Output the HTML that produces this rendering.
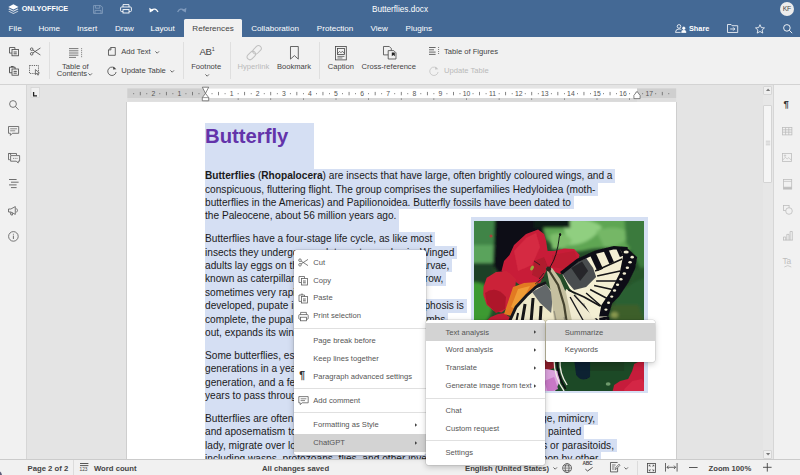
<!DOCTYPE html>
<html lang="en">
<head>
<meta charset="utf-8">
<title>Butterflies.docx</title>
<style>
*{box-sizing:border-box;margin:0;padding:0}
html,body{width:800px;height:475px;overflow:hidden;background:#e4e4e4;font-family:"Liberation Sans",sans-serif;color:#444}
.abs{position:absolute}
#app{position:relative;width:800px;height:475px;overflow:hidden}
svg{position:absolute;overflow:visible}
/* header */
#hdr{left:0;top:0;width:800px;height:37.2px;background:#446995}
#hdr .t{position:absolute;color:#fff;font-size:8.1px;line-height:10px;white-space:nowrap}
#brand{left:21.7px;top:4px;font-weight:bold;font-size:7.3px !important;letter-spacing:0}
.tab{top:23.6px}
#reftab{left:184px;top:19px;width:58px;height:19px;background:#f1f1f1;border-radius:1.5px 1.5px 0 0}
#reftab span{position:absolute;left:0;width:58px;text-align:center;top:4.6px;font-size:8.1px;line-height:10px;color:#444}
/* toolbar */
#tb{left:0;top:37.2px;width:800px;height:47.5px;background:#f1f1f1;border-bottom:1px solid #d3d3d3}
#tb .l{position:absolute;font-size:7.6px;line-height:7.6px;color:#444;white-space:nowrap}
#tb .l.c{text-align:center}
#tb .dis{color:#b9b9b9}
.sep{position:absolute;top:5px;width:1px;height:37px;background:#dfdfdf}
/* sidebars */
#ls{left:0;top:84.7px;width:27.4px;height:375px;background:#f1f1f1;border-right:1px solid #d6d6d6}
#rs{left:773.4px;top:84.7px;width:26.6px;height:375px;background:#f1f1f1;border-left:1px solid #d6d6d6}
/* status */
#sb{left:0;top:458.8px;width:800px;height:16.2px;background:#f1f1f1;border-top:1px solid #cbcbcb}
#sb .t{position:absolute;top:3.8px;font-size:7.7px;line-height:10px;font-weight:bold;color:#444;white-space:nowrap}
/* doc */
#page{left:126.2px;top:101.7px;width:550.5px;height:360px;background:#fff;border-left:1px solid #cecece;border-right:1px solid #cecece}
.ln{position:absolute;left:205px;font-size:10.15px;line-height:13.43px;color:#1a1a1a;white-space:pre;background:#d5dff3}
.ln .tx{position:relative;top:0px}
#ttl{position:absolute;left:205px;top:122.6px;width:108.8px;height:46.5px;background:#d5dff3}
#ttl span{position:absolute;left:0;top:1.9px;font-size:20.3px;line-height:24px;font-weight:bold;color:#6333aa;white-space:nowrap}
#imgsel{position:absolute;left:470.5px;top:217px;width:177px;height:176px;background:#d5dff3}
#img{position:absolute;left:474.3px;top:220.5px;width:170.2px;height:170px;overflow:hidden;background:#1f3a1e}
/* scrollbar */
.sbtn{position:absolute;left:763.3px;width:9.2px;height:9px;background:#efefef;border:1px solid #d6d6d6;border-radius:1px}
#thumb{position:absolute;left:763.3px;top:105.3px;width:9.2px;height:78px;background:#f5f5f5;border:1px solid #d4d4d4;border-radius:1px}
/* menus */
.menu{position:absolute;background:#fff;border-radius:2.5px;box-shadow:0 2px 6px rgba(0,0,0,.22),0 0 0 .6px rgba(0,0,0,.12)}
.mi{position:absolute;left:0;right:0;height:17.9px;font-size:7.6px;line-height:17.9px;color:#555;white-space:nowrap}
.mi.hl{background:#d3d3d3}
.mi .ar{position:absolute;top:0;font-size:5px;color:#444}
.ms{position:absolute;left:0;right:0;height:1px;background:#e0e0e0}
</style>
</head>
<body>
<div id="app">

<!-- document area -->
<div id="page" class="abs"></div>
<div id="ttl"><span>Butterfly</span></div>
<div class="ln" style="top:169.10px;height:13.53px"><span class="tx"><b>Butterflies</b> (<b>Rhopalocera</b>) are insects that have large, often brightly coloured wings, and a </span></div>
<div class="ln" style="top:182.53px;height:13.53px"><span class="tx">conspicuous, fluttering flight. The group comprises the superfamilies Hedyloidea (moth- </span></div>
<div class="ln" style="top:195.96px;height:13.53px"><span class="tx">butterflies in the Americas) and Papilionoidea. Butterfly fossils have been dated to </span></div>
<div class="ln" style="top:209.39px;height:22.75px"><span class="tx">the Paleocene, about 56 million years ago. </span></div>
<div class="ln" style="top:232.10px;height:13.53px"><span class="tx">Butterflies have a four-stage life cycle, as like most </span></div>
<div class="ln" style="top:245.53px;height:13.53px"><span class="tx">insects they undergo complete metamorphosis. Winged </span></div>
<div class="ln" style="top:258.96px;height:13.53px"><span class="tx">adults lay eggs on the food plant on which their larvae, </span></div>
<div class="ln" style="top:272.39px;height:13.53px"><span class="tx">known as caterpillars, will feed. The caterpillars grow, </span></div>
<div class="ln" style="top:285.82px;height:13.53px"><span class="tx">sometimes very rapidly, and when fully </span></div>
<div class="ln" style="top:299.25px;height:13.53px"><span class="tx">developed, pupate in a chrysalis. When metamorphosis is </span></div>
<div class="ln" style="top:312.68px;height:13.53px"><span class="tx">complete, the pupal skin splits, the adult insect climbs </span></div>
<div class="ln" style="top:326.11px;height:22.75px"><span class="tx">out, expands its wings to dry, and flies off. </span></div>
<div class="ln" style="top:348.80px;height:13.53px"><span class="tx">Some butterflies, especially in the tropics, have several </span></div>
<div class="ln" style="top:362.23px;height:13.53px"><span class="tx">generations in a year, while others have a single </span></div>
<div class="ln" style="top:375.66px;height:13.53px"><span class="tx">generation, and a few in cold locations may take several </span></div>
<div class="ln" style="top:389.09px;height:22.75px"><span class="tx">years to pass through their entire life cycle. </span></div>
<div class="ln" style="top:411.80px;height:13.53px;letter-spacing:0.025px"><span class="tx">Butterflies are often polymorphic, and many species make use of camouflage, mimicry, </span></div>
<div class="ln" style="top:425.23px;height:13.53px;letter-spacing:0.025px"><span class="tx">and aposematism to evade their predators. Some, like the monarch and the painted </span></div>
<div class="ln" style="top:438.66px;height:13.53px;letter-spacing:0.025px"><span class="tx">lady, migrate over long distances. Many butterflies are attacked by parasites or parasitoids, </span></div>
<div class="ln" style="top:452.09px;height:13.53px;letter-spacing:0.025px"><span class="tx">including wasps, protozoans, flies, and other invertebrates, or are preyed upon by other </span></div>
<div id="imgsel"></div>
<div id="img">
<svg style="left:0;top:0" width="170.2" height="170" viewBox="0 0 170 170" preserveAspectRatio="none">
<defs>
<filter id="b1" x="-10%" y="-10%" width="120%" height="120%"><feGaussianBlur stdDeviation="1.8"/></filter>
<filter id="b2" x="-10%" y="-10%" width="120%" height="120%"><feGaussianBlur stdDeviation="0.55"/></filter>
<filter id="b3" x="-10%" y="-10%" width="120%" height="120%"><feGaussianBlur stdDeviation="0.5"/></filter>
</defs>
<rect width="170" height="170" fill="#244c28"/>
<!-- background foliage -->
<g filter="url(#b1)">
<path d="M-5 -5H24V28H-5Z" fill="#3f8446"/>
<path d="M-5 24H22V42H-5Z" fill="#5aa35c"/>
<path d="M-5 42H20V62H-5Z" fill="#1e4126"/>
<path d="M-5 62Q12 58 18 76Q20 96 8 104L-5 106Z" fill="#3e9a32"/>
<path d="M21 -8H68L72 16L60 28L38 40L26 54L19 44Z" fill="#0b1116"/>
<path d="M24 -8H64V22H24Z" fill="#090e13"/><path d="M26 0H56V34H26Z" fill="#0b1015"/>
<path d="M66 -6H160V30Q130 24 108 30Q86 34 72 18Z" fill="#5fa653"/>
<path d="M88 0Q112 -6 128 6Q116 24 94 24Z" fill="#90cf80"/>
<path d="M76 14Q90 8 98 20Q90 30 78 28Z" fill="#7dbd6a"/>
<path d="M122 10Q142 2 156 12Q150 26 130 26Z" fill="#74b766"/>
<path d="M150 -6H176V70Q164 40 152 22Z" fill="#3a7a3c"/>
<path d="M60 -6H96V7H60Z" fill="#101a16"/><path d="M158 50L176 44V100L150 84Z" fill="#27562c"/>
<path d="M142 72Q160 60 176 56V120Q150 112 138 94Z" fill="#2c6030"/>
<path d="M128 94Q150 100 176 118V176H60V140Q96 122 128 94Z" fill="#264f2a"/>
<path d="M136 84L164 84L170 100L140 100Z" fill="#3d5e2c"/>
<ellipse cx="140" cy="94" rx="4" ry="3" fill="#8a9a50"/>
<path d="M84 146Q112 138 138 150L138 176H84Z" fill="#1b3a22"/>
</g>
<!-- flowers -->
<g filter="url(#b2)">
<path d="M27.5 50L30 40L35.5 34L40 24L52 13L64 8.5L70 13L72 20L73.5 30L80 30L90 27.5L100 28L105.5 34L103 42L95 49L86 53L73 48L66 62L47 65L38 58Z" fill="#c81f38"/>
<path d="M40 30L52 17L62 12L66 26L58 44L44 50Z" fill="#d52942"/>
<path d="M60 40L70 36L74 46L66 58L58 54Z" fill="#b01a2e"/>
<path d="M78 34L100 30L103 37L90 48L78 46Z" fill="#bd1c30"/>
<path d="M9.5 66L12.7 56.8L22 51L33 50L42 58L41 70L38 80L34 86L27.5 91.5L20 90L12.7 84L9.3 74Z" fill="#cb2138"/>
<path d="M11 72Q22 64 32 76L31 88L22 92L13 83Z" fill="#ae182c"/>
<path d="M10 104Q16 93 30 92L38 98V114H8Z" fill="#c21d34"/>
<path d="M39 66L50 62L64 61L58 71L49 84L41 96L30 93L35 78Z" fill="#e27a22"/>
<path d="M44 68L56 65L50 76L42 88L37 86Z" fill="#f09c36"/>
<circle cx="17" cy="15" r="1.6" fill="#a8433d"/>
</g>
<!-- butterfly -->
<g filter="url(#b3)">
<!-- hind wing right -->
<path d="M92 68L112 80L133 96L132 112L124 128L112 142L98 152L88 120L84 90Z" fill="#f0ead0"/>
<path d="M130 96L131 110L124 126L113 140L102 150" fill="none" stroke="#111116" stroke-width="10"/>
<path d="M96 76L116 112M92 84L104 130M100 74L124 100" stroke="#18181c" stroke-width="1.4" fill="none"/>
<path d="M110 82L117 87" stroke="#18181c" stroke-width="1.6"/>
<g fill="#efe9cc"><ellipse cx="132" cy="100" rx="1.6" ry="1.3"/><ellipse cx="131" cy="110" rx="1.6" ry="1.3"/><ellipse cx="126" cy="121" rx="1.6" ry="1.3"/><ellipse cx="119" cy="131" rx="1.6" ry="1.3"/></g>
<!-- left wing -->
<path d="M36.6 99L42 86L52.5 75L62 66L70.7 62.5L80 72.2L80 120L70 150L56 140L40 118Z" fill="#eee8c8"/>
<path d="M35.6 100L42 86L52.5 74.5L62 66L72 61.6" fill="none" stroke="#17171b" stroke-width="3"/>
<path d="M58 71L72 63L79 74L77 92L66 82Z" fill="#64686a"/>
<path d="M51 83L48 101M59 77L57 101M67 85L66 101" stroke="#131317" stroke-width="3" fill="none"/>
<path d="M44 92L42 102" stroke="#131317" stroke-width="2"/>
<!-- forewing right -->
<path d="M87.5 52L103.4 39.8L121.6 31.8L139.8 27.3L153.4 28.4L162.5 36.4L160.2 47.7L153.4 61.4L144.3 75L137.5 81.8L133 95.5L118.7 97.7L109.4 81.5L95.6 67.6Z" fill="#f4efd3"/>
<path d="M88 52.5L103 41L112 37L119 47L122 56L112 66L100 69L94 62Z" fill="#4a4e50"/>
<path d="M97 47L108 40.6L114 50L106 60Z" fill="#26282a"/>
<path d="M87 52.4L103.4 39.4L121.6 31.2L139.8 26.6L153.4 27.8" fill="none" stroke="#0f0f14" stroke-width="3.4"/>
<path d="M146 27.4L153.4 27.4L163 36.2L160.8 47.9L154 61.8L144.9 75.5L138.1 82.3L134 95.5L125 95.5L127.3 84.1L136.4 70.5L145.5 52.3L148.9 35.2Z" fill="#0f0f14"/>
<path d="M118.2 32L126.1 49" stroke="#0f0f14" stroke-width="6.2" fill="none"/>
<path d="M131.8 29L137.5 42" stroke="#0f0f14" stroke-width="5" fill="none"/>
<path d="M144 27.6L147.4 35.4" stroke="#0f0f14" stroke-width="3.6" fill="none"/>
<path d="M121 50L148 38M123 55L146 50M122 60L142 60M120 64.5L138 68.5M116 68.5L133 77.5M112 72L128 86" stroke="#141418" stroke-width="1.5" fill="none"/>
<path d="M94.3 69L110 76L126 85" stroke="#141418" stroke-width="1.8" fill="none"/>
<g fill="#f3eed4">
<ellipse cx="152" cy="31" rx="2.6" ry="1.5"/><ellipse cx="158" cy="36.2" rx="1.7" ry="1.4"/><ellipse cx="155.9" cy="41.2" rx="1.7" ry="1.3"/><ellipse cx="153.2" cy="46.8" rx="1.7" ry="1.3"/>
<ellipse cx="150.2" cy="52.5" rx="1.7" ry="1.3"/><ellipse cx="146.8" cy="58.2" rx="1.6" ry="1.3"/><ellipse cx="143.4" cy="63.8" rx="1.6" ry="1.3"/>
<ellipse cx="140.4" cy="69.5" rx="1.6" ry="1.2"/><ellipse cx="137.6" cy="75.6" rx="1.5" ry="1.2"/><ellipse cx="134.4" cy="81.8" rx="1.5" ry="1.2"/><ellipse cx="131.8" cy="88.6" rx="1.5" ry="1.2"/>
</g>
<!-- body -->
<path d="M72 46L78 47L86 58L92 72L97.9 100L96 130L86 124L80 100L77 72Z" fill="#c6c0a0"/>
<path d="M74 48L84 64L90 84L93 104L92 122" fill="none" stroke="#45432f" stroke-width="2.2"/>
<path d="M80 90L88 130M84 100L96 140M78 110L80 150M90 96L98 128" stroke="#989480" stroke-width="1.3" fill="none"/>
<ellipse cx="74.5" cy="48" rx="2.6" ry="2.4" fill="#2a281f"/>
<!-- antenna & legs -->
<path d="M76 46Q83 36 85.4 15" fill="none" stroke="#101012" stroke-width="0.9"/>
<ellipse cx="86" cy="13.6" rx="1.1" ry="1.6" fill="#101012"/>
<path d="M70 52L65 58M70 56L61 63M66 44L60 40" stroke="#1a1a1a" stroke-width="0.8" fill="none"/>
<ellipse cx="58" cy="47" rx="1.6" ry="2.6" fill="#9aa83a" transform="rotate(30 58 47)"/>
</g>
<!-- bottom strip (visible under menus) -->
<g filter="url(#b2)">
<rect x="60" y="139" width="112" height="34" fill="#1e4a27"/>
<path d="M100 139H116V156Q108 162 102 154Z" fill="#0f2030"/>
<path d="M116 139H150V150H116Z" fill="#1a4024"/>
<path d="M60 139H80V147L72 150H60Z" fill="#8e1f2a"/>
<path d="M60 150L72 148L84 150L86 160L80 172H60Z" fill="#dba2dd"/>
<path d="M70 160L80 156L84 168L74 172Z" fill="#c878c6"/>
<path d="M80 139Q80 156 90 170M86 139Q85 152 93 164" stroke="#f0ede4" stroke-width="1.3" fill="none"/>
<path d="M83 139Q82.6 154 91.6 168" stroke="#0e0e12" stroke-width="1.8" fill="none"/>
<path d="M138 172L140 164L146 160L154 158L158 150L160 143L166 140H172V172Z" fill="#c61c3a"/>
<path d="M150 168L158 160L168 158L172 166V172H150Z" fill="#d42644"/>
<ellipse cx="134" cy="163" rx="2.4" ry="1.8" fill="#6e9a6c"/>
</g>
</svg>

</div>


<div class="abs" style="left:27.4px;top:85.5px;width:748px;height:16.2px;background:#e4e4e4"></div>
<svg style="left:0;top:0" width="800" height="104" viewBox="0 0 800 104">
<rect x="127.3" y="98.0" width="548.9" height="3.7" fill="#dedede"/>
<rect x="127.3" y="88.4" width="548.9" height="9.6" fill="#cfcfcf"/>
<rect x="205.5" y="88.4" width="431.5" height="9.6" fill="#ffffff"/>
<rect x="205.5" y="98.0" width="431.5" height="3.7" fill="#d9d9d9"/>
<rect x="133.32" y="93.1" width="0.8" height="1.1" fill="#666"/>
<rect x="139.85" y="91.9" width="0.8" height="3.4" fill="#666"/>
<rect x="146.38" y="93.1" width="0.8" height="1.1" fill="#666"/>
<text x="153.3" y="96.0" font-size="6.8" text-anchor="middle" fill="#555" font-family="Liberation Sans, sans-serif">2</text>
<rect x="159.42" y="93.1" width="0.8" height="1.1" fill="#666"/>
<rect x="165.95" y="91.9" width="0.8" height="3.4" fill="#666"/>
<rect x="172.47" y="93.1" width="0.8" height="1.1" fill="#666"/>
<text x="179.4" y="96.0" font-size="6.8" text-anchor="middle" fill="#555" font-family="Liberation Sans, sans-serif">1</text>
<rect x="185.53" y="93.1" width="0.8" height="1.1" fill="#666"/>
<rect x="192.05" y="91.9" width="0.8" height="3.4" fill="#666"/>
<rect x="198.57" y="93.1" width="0.8" height="1.1" fill="#666"/>
<rect x="211.62" y="93.1" width="0.8" height="1.1" fill="#666"/>
<rect x="218.15" y="91.9" width="0.8" height="3.4" fill="#666"/>
<rect x="224.67" y="93.1" width="0.8" height="1.1" fill="#666"/>
<text x="231.6" y="96.0" font-size="6.8" text-anchor="middle" fill="#555" font-family="Liberation Sans, sans-serif">1</text>
<rect x="237.72" y="93.1" width="0.8" height="1.1" fill="#666"/>
<rect x="244.25" y="91.9" width="0.8" height="3.4" fill="#666"/>
<rect x="250.78" y="93.1" width="0.8" height="1.1" fill="#666"/>
<text x="257.7" y="96.0" font-size="6.8" text-anchor="middle" fill="#555" font-family="Liberation Sans, sans-serif">2</text>
<rect x="263.83" y="93.1" width="0.8" height="1.1" fill="#666"/>
<rect x="270.35" y="91.9" width="0.8" height="3.4" fill="#666"/>
<rect x="276.88" y="93.1" width="0.8" height="1.1" fill="#666"/>
<text x="283.8" y="96.0" font-size="6.8" text-anchor="middle" fill="#555" font-family="Liberation Sans, sans-serif">3</text>
<rect x="289.93" y="93.1" width="0.8" height="1.1" fill="#666"/>
<rect x="296.45" y="91.9" width="0.8" height="3.4" fill="#666"/>
<rect x="302.98" y="93.1" width="0.8" height="1.1" fill="#666"/>
<text x="309.9" y="96.0" font-size="6.8" text-anchor="middle" fill="#555" font-family="Liberation Sans, sans-serif">4</text>
<rect x="316.03" y="93.1" width="0.8" height="1.1" fill="#666"/>
<rect x="322.55" y="91.9" width="0.8" height="3.4" fill="#666"/>
<rect x="329.08" y="93.1" width="0.8" height="1.1" fill="#666"/>
<text x="336.0" y="96.0" font-size="6.8" text-anchor="middle" fill="#555" font-family="Liberation Sans, sans-serif">5</text>
<rect x="342.12" y="93.1" width="0.8" height="1.1" fill="#666"/>
<rect x="348.65" y="91.9" width="0.8" height="3.4" fill="#666"/>
<rect x="355.18" y="93.1" width="0.8" height="1.1" fill="#666"/>
<text x="362.1" y="96.0" font-size="6.8" text-anchor="middle" fill="#555" font-family="Liberation Sans, sans-serif">6</text>
<rect x="368.23" y="93.1" width="0.8" height="1.1" fill="#666"/>
<rect x="374.75" y="91.9" width="0.8" height="3.4" fill="#666"/>
<rect x="381.28" y="93.1" width="0.8" height="1.1" fill="#666"/>
<text x="388.2" y="96.0" font-size="6.8" text-anchor="middle" fill="#555" font-family="Liberation Sans, sans-serif">7</text>
<rect x="394.33" y="93.1" width="0.8" height="1.1" fill="#666"/>
<rect x="400.85" y="91.9" width="0.8" height="3.4" fill="#666"/>
<rect x="407.38" y="93.1" width="0.8" height="1.1" fill="#666"/>
<text x="414.3" y="96.0" font-size="6.8" text-anchor="middle" fill="#555" font-family="Liberation Sans, sans-serif">8</text>
<rect x="420.43" y="93.1" width="0.8" height="1.1" fill="#666"/>
<rect x="426.95" y="91.9" width="0.8" height="3.4" fill="#666"/>
<rect x="433.48" y="93.1" width="0.8" height="1.1" fill="#666"/>
<text x="440.4" y="96.0" font-size="6.8" text-anchor="middle" fill="#555" font-family="Liberation Sans, sans-serif">9</text>
<rect x="446.53" y="93.1" width="0.8" height="1.1" fill="#666"/>
<rect x="453.05" y="91.9" width="0.8" height="3.4" fill="#666"/>
<rect x="459.58" y="93.1" width="0.8" height="1.1" fill="#666"/>
<text x="466.5" y="96.0" font-size="6.8" text-anchor="middle" fill="#555" font-family="Liberation Sans, sans-serif">10</text>
<rect x="472.63" y="93.1" width="0.8" height="1.1" fill="#666"/>
<rect x="479.15" y="91.9" width="0.8" height="3.4" fill="#666"/>
<rect x="485.68" y="93.1" width="0.8" height="1.1" fill="#666"/>
<text x="492.6" y="96.0" font-size="6.8" text-anchor="middle" fill="#555" font-family="Liberation Sans, sans-serif">11</text>
<rect x="498.73" y="93.1" width="0.8" height="1.1" fill="#666"/>
<rect x="505.25" y="91.9" width="0.8" height="3.4" fill="#666"/>
<rect x="511.77" y="93.1" width="0.8" height="1.1" fill="#666"/>
<text x="518.7" y="96.0" font-size="6.8" text-anchor="middle" fill="#555" font-family="Liberation Sans, sans-serif">12</text>
<rect x="524.83" y="93.1" width="0.8" height="1.1" fill="#666"/>
<rect x="531.35" y="91.9" width="0.8" height="3.4" fill="#666"/>
<rect x="537.88" y="93.1" width="0.8" height="1.1" fill="#666"/>
<text x="544.8" y="96.0" font-size="6.8" text-anchor="middle" fill="#555" font-family="Liberation Sans, sans-serif">13</text>
<rect x="550.93" y="93.1" width="0.8" height="1.1" fill="#666"/>
<rect x="557.45" y="91.9" width="0.8" height="3.4" fill="#666"/>
<rect x="563.98" y="93.1" width="0.8" height="1.1" fill="#666"/>
<text x="570.9" y="96.0" font-size="6.8" text-anchor="middle" fill="#555" font-family="Liberation Sans, sans-serif">14</text>
<rect x="577.02" y="93.1" width="0.8" height="1.1" fill="#666"/>
<rect x="583.55" y="91.9" width="0.8" height="3.4" fill="#666"/>
<rect x="590.08" y="93.1" width="0.8" height="1.1" fill="#666"/>
<text x="597.0" y="96.0" font-size="6.8" text-anchor="middle" fill="#555" font-family="Liberation Sans, sans-serif">15</text>
<rect x="603.13" y="93.1" width="0.8" height="1.1" fill="#666"/>
<rect x="609.65" y="91.9" width="0.8" height="3.4" fill="#666"/>
<rect x="616.18" y="93.1" width="0.8" height="1.1" fill="#666"/>
<text x="623.1" y="96.0" font-size="6.8" text-anchor="middle" fill="#555" font-family="Liberation Sans, sans-serif">16</text>
<rect x="629.23" y="93.1" width="0.8" height="1.1" fill="#666"/>
<rect x="635.75" y="91.9" width="0.8" height="3.4" fill="#666"/>
<rect x="642.27" y="93.1" width="0.8" height="1.1" fill="#666"/>
<text x="649.2" y="96.0" font-size="6.8" text-anchor="middle" fill="#555" font-family="Liberation Sans, sans-serif">17</text>
<rect x="655.33" y="93.1" width="0.8" height="1.1" fill="#666"/>
<rect x="661.85" y="91.9" width="0.8" height="3.4" fill="#666"/>
<rect x="668.38" y="93.1" width="0.8" height="1.1" fill="#666"/>
<rect x="237.78" y="98.2" width="0.7" height="1.8" fill="#777"/>
<rect x="270.40" y="98.2" width="0.7" height="1.8" fill="#777"/>
<rect x="303.02" y="98.2" width="0.7" height="1.8" fill="#777"/>
<rect x="335.65" y="98.2" width="0.7" height="1.8" fill="#777"/>
<rect x="368.27" y="98.2" width="0.7" height="1.8" fill="#777"/>
<rect x="400.90" y="98.2" width="0.7" height="1.8" fill="#777"/>
<rect x="433.52" y="98.2" width="0.7" height="1.8" fill="#777"/>
<rect x="466.15" y="98.2" width="0.7" height="1.8" fill="#777"/>
<rect x="498.77" y="98.2" width="0.7" height="1.8" fill="#777"/>
<rect x="531.40" y="98.2" width="0.7" height="1.8" fill="#777"/>
<rect x="564.02" y="98.2" width="0.7" height="1.8" fill="#777"/>
<rect x="596.65" y="98.2" width="0.7" height="1.8" fill="#777"/>
<rect x="629.27" y="98.2" width="0.7" height="1.8" fill="#777"/>
<path d="M202.3 87.2h6.4l-3.2 6.2z" fill="#fff" stroke="#555" stroke-width="0.7"/>
<path d="M202.3 97.6l3.2 -4.2l3.2 4.2v3.2h-6.4z" fill="#fff" stroke="#555" stroke-width="0.7"/>
<path d="M202.3 97.6h6.4" stroke="#555" stroke-width="0.6"/>
<path d="M633.9 98.6v-3.2l3.1 -4l3.1 4v3.2z" fill="#fff" stroke="#555" stroke-width="0.7"/>
<rect x="31" y="87.6" width="8.6" height="9.6" fill="#f1f1f1" stroke="#cfcfcf" stroke-width="0.6"/>
<path d="M33.6 92v3.8h3.4" fill="none" stroke="#222" stroke-width="1.3"/>
</svg>
<!-- scrollbar -->
<div class="abs" style="left:763.3px;top:85.5px;width:9.6px;height:374px;background:#e7e7e7"></div>
<div class="sbtn" style="top:85.5px"></div>
<div id="thumb"></div>
<div class="sbtn" style="top:449.5px"></div>

<!-- header -->
<div id="hdr" class="abs">
  <div id="brand" class="t">ONLYOFFICE</div>
  <div class="t tab" style="left:8.6px">File</div>
  <div class="t tab" style="left:38.5px">Home</div>
  <div class="t tab" style="left:77px">Insert</div>
  <div class="t tab" style="left:114.9px">Draw</div>
  <div class="t tab" style="left:150.5px">Layout</div>
  <div class="t tab" style="left:251.2px">Collaboration</div>
  <div class="t tab" style="left:316.8px">Protection</div>
  <div class="t tab" style="left:370.5px">View</div>
  <div class="t tab" style="left:405.5px">Plugins</div>
  <div class="t" style="left:300px;width:200px;text-align:center;top:5.4px;font-size:8.2px">Butterflies.docx</div>
  <div class="t" style="left:689px;top:23.7px;font-weight:bold;font-size:7.3px">Share</div>
  <div id="reftab" class="abs"><span>References</span></div>
</div>

<!-- toolbar -->
<div id="tb" class="abs">
  <div class="sep" style="margin-top:-0.1px;left:48.6px"></div>
  <div class="sep" style="margin-top:-0.1px;left:183.3px"></div>
  <div class="sep" style="margin-top:-0.1px;left:229.8px"></div>
  <div class="sep" style="margin-top:-0.1px;left:319.2px"></div>
  <div class="l c" style="left:45.4px;width:60px;top:25.7px">Table of</div>
  <div class="l c" style="left:41.9px;width:60px;top:33.3px">Contents</div>
  <div class="l" style="left:121.2px;top:10.7px">Add Text</div>
  <div class="l" style="left:121.2px;top:29.6px">Update Table</div>
  <div class="l c" style="left:176.2px;width:60px;top:25.7px">Footnote</div>
  <div class="l c dis" style="left:223.4px;width:60px;top:25.7px">Hyperlink</div>
  <div class="l c" style="left:264px;width:60px;top:25.7px">Bookmark</div>
  <div class="l c" style="left:310.9px;width:60px;top:25.7px">Caption</div>
  <div class="l c" style="left:348.7px;width:80px;top:25.7px">Cross-reference</div>
  <div class="l" style="left:444px;top:10.4px">Table of Figures</div>
  <div class="l dis" style="left:444px;top:29.6px">Update Table</div>
</div>

<!-- sidebars -->
<div id="ls" class="abs"></div>
<div id="rs" class="abs"></div>

<!-- status bar -->
<div id="sb" class="abs">
  <div class="t" style="left:27.6px">Page 2 of 2</div>
  <div class="abs" style="left:73px;top:0;width:1px;height:15px;background:#dcdcdc"></div>
  <div class="t" style="left:94px">Word count</div>
  <div class="t" style="left:262px">All changes saved</div>
  <div class="t" style="left:465px">English (United States)</div>
  <div class="t" style="left:708.5px">Zoom 100%</div>
</div>

<svg style="left:8.2px;top:3.6px" width="10.8" height="10.6" viewBox="0 0 10.8 10.6" fill="none" stroke="none" stroke-width="0.80" ><path d="M5.4 0.3L10.5 2.9L5.4 5.5L0.3 2.9Z" fill="#fff" stroke="none"/><path d="M1.3 4.6L0.3 5.2L5.4 7.8L10.5 5.2L9.5 4.6L5.4 6.7Z" fill="#fff" stroke="none" opacity=".85"/><path d="M1.3 6.9L0.3 7.5L5.4 10.1L10.5 7.5L9.5 6.9L5.4 9Z" fill="#fff" stroke="none" opacity=".7"/></svg>
<svg style="left:93.0px;top:4.5px" width="10.0" height="9.0" viewBox="0 0 10.0 9.0" fill="none" stroke="#8aa3c2" stroke-width="0.80" ><path d="M0.6 0.6h7.2l1.6 1.6v6.2h-8.8z"/><path d="M2.4 0.6v2.6h4.4v-2.6M2 8.4v-3h6v3"/></svg>
<svg style="left:120.0px;top:4.3px" width="12.0" height="9.6" viewBox="0 0 12.0 9.6" fill="none" stroke="#fff" stroke-width="0.90" ><path d="M3 3V0.6h6V3"/><rect x="0.6" y="3" width="10.8" height="4.6" rx="1"/><rect x="3" y="5.6" width="6" height="3.4" fill="#446995"/></svg>
<svg style="left:149.0px;top:6.6px" width="9.6" height="6.0" viewBox="0 0 9.6 6.0" fill="none" stroke="none" stroke-width="0.80" ><path d="M2.4 3.2Q6.4 0.2 9 5" fill="none" stroke="#fff" stroke-width="1.3"/><path d="M0.2 0.8L0.8 5.6L4.6 3.4Z" fill="#fff" stroke="none"/></svg>
<svg style="left:177.0px;top:6.6px" width="9.6" height="6.0" viewBox="0 0 9.6 6.0" fill="none" stroke="none" stroke-width="0.80" ><path d="M7.2 3.2Q3.2 0.2 0.6 5" fill="none" stroke="#7f9abd" stroke-width="1.3"/><path d="M9.4 0.8L8.8 5.6L5 3.4Z" fill="#7f9abd" stroke="none"/></svg>
<div class="abs" style="left:779.8px;top:1.6px;width:14.2px;height:14.2px;border-radius:50%;background:#ececec;color:#444;font-size:6.8px;line-height:14.6px;text-align:center;letter-spacing:-0.3px">KF</div>
<svg style="left:675.0px;top:24.2px" width="11.4" height="9.0" viewBox="0 0 11.4 9.0" fill="none" stroke="#fff" stroke-width="0.80" ><circle cx="4" cy="2.4" r="1.8"/><path d="M0.5 8.4Q0.6 5 4 5Q5.6 5 6.4 5.8M0.5 8.4H5.6"/><circle cx="8.8" cy="4.2" r="1.2" fill="#fff"/><path d="M6.6 8.4Q6.7 6.2 8.8 6.2Q10.9 6.2 11 8.4Z" fill="#fff"/></svg>
<svg style="left:726.8px;top:24.0px" width="11.2" height="9.0" viewBox="0 0 11.2 9.0" fill="none" stroke="#fff" stroke-width="0.80" ><path d="M0.5 0.5h3.6l1 1.2h5.6v6.8h-10.2z"/><path d="M3.2 5h4.6M6.2 3.4L7.8 5L6.2 6.6"/></svg>
<svg style="left:755.0px;top:23.8px" width="10.0" height="9.6" viewBox="0 0 10.0 9.6" fill="none" stroke="#fff" stroke-width="0.80" ><path d="M5 0.7L6.3 3.6L9.5 3.9L7.1 6L7.8 9.1L5 7.5L2.2 9.1L2.9 6L0.5 3.9L3.7 3.6Z"/></svg>
<svg style="left:782.5px;top:24.0px" width="9.6" height="9.6" viewBox="0 0 9.6 9.6" fill="none" stroke="#fff" stroke-width="0.90" ><circle cx="3.9" cy="3.9" r="3.3"/><path d="M6.3 6.3L9.2 9.2"/></svg>
<svg style="left:9.0px;top:47.0px" width="10.0" height="9.2" viewBox="0 0 10.0 9.2" fill="none" stroke="#444" stroke-width="0.80" ><path d="M0.5 0.5h5.4v2M0.5 0.5v5.6h2.4"/><rect x="3" y="2.6" width="6.4" height="6.2"/><path d="M4.6 5h3.2M4.6 6.8h3.2" stroke-width="0.9"/></svg>
<svg style="left:9.0px;top:65.6px" width="10.0" height="9.6" viewBox="0 0 10.0 9.6" fill="none" stroke="#444" stroke-width="0.80" ><path d="M0.5 1.2h5.6v1.8M0.5 1.2v5.6h2.4M2 0.5h2.6" stroke-width="0.9"/><rect x="3" y="3" width="6.4" height="6.2"/><path d="M4.6 5.4h3.2M4.6 7.2h3.2" stroke-width="0.9"/></svg>
<svg style="left:29.6px;top:46.8px" width="10.8" height="9.0" viewBox="0 0 10.8 9.0" fill="none" stroke="#444" stroke-width="0.80" ><circle cx="1.7" cy="2.2" r="1.3"/><circle cx="1.7" cy="6.8" r="1.3"/><path d="M2.8 3L10.4 8M2.8 6L10.4 1"/></svg>
<svg style="left:29.0px;top:65.4px" width="11.0" height="10.4" viewBox="0 0 11.0 10.4" fill="none" stroke="#444" stroke-width="0.80" ><rect x="0.5" y="0.5" width="9" height="8" stroke-dasharray="1.2 1" stroke-width="0.8"/><path d="M6.4 4.6V9.6L7.8 8.4L8.8 10.2L9.6 9.8L8.7 8.1L10.4 7.9Z" fill="#f1f1f1" stroke-width="0.7"/></svg>
<svg style="left:68.6px;top:48.0px" width="13.6" height="10.0" viewBox="0 0 13.6 10.0" fill="none" stroke="#444" stroke-width="0.80" ><path d="M0 0.6h9.4M0 2.8h9.4M0 5h9.4M0 7.2h9.4M0 9.4h7" stroke-width="0.7"/><path d="M12.6 0.2v9.6" stroke-width="0.7" stroke-dasharray="1 1"/></svg>
<svg style="left:107.6px;top:47.0px" width="7.8" height="8.8" viewBox="0 0 7.8 8.8" fill="none" stroke="#444" stroke-width="0.80" ><path d="M7.3 0.5h-4.4l-2.4 2.4v5.4h6.8zM2.9 0.5v2.4h-2.4"/></svg>
<svg style="left:154.6px;top:50.6px" width="4.4" height="2.8" viewBox="0 0 4.4 2.8" fill="none" stroke="#444" stroke-width="0.80" ><path d="M0.4 0.4L2.2 2.2L4 0.4"/></svg>
<svg style="left:170.0px;top:69.6px" width="4.4" height="2.8" viewBox="0 0 4.4 2.8" fill="none" stroke="#444" stroke-width="0.80" ><path d="M0.4 0.4L2.2 2.2L4 0.4"/></svg>
<svg style="left:88.2px;top:73.4px" width="4.4" height="2.8" viewBox="0 0 4.4 2.8" fill="none" stroke="#444" stroke-width="0.80" ><path d="M0.4 0.4L2.2 2.2L4 0.4"/></svg>
<svg style="left:204.8px;top:74.2px" width="4.4" height="2.8" viewBox="0 0 4.4 2.8" fill="none" stroke="#444" stroke-width="0.80" ><path d="M0.4 0.4L2.2 2.2L4 0.4"/></svg>
<svg style="left:106.6px;top:65.6px" width="9.8" height="9.8" viewBox="0 0 9.8 9.8" fill="none" stroke="#444" stroke-width="0.80" ><path d="M8.6 3.2A4.2 4.2 0 1 0 9.1 6"/><path d="M6.6 0.6L8.9 3.2L6 3.6" fill="#444" stroke="none"/></svg>
<div class="abs" style="left:199.4px;top:46.2px;font-size:9.6px;line-height:11px;color:#444;letter-spacing:-0.3px">AB<span style="font-size:5.4px;position:relative;top:-4.2px;left:0.2px">1</span></div>
<svg style="left:245.6px;top:45.2px" width="16.4" height="15.4" viewBox="0 0 16.4 15.4" fill="none" stroke="#c0c0c0" stroke-width="1.00" ><g transform="rotate(-45 8.2 7.7)"><rect x="-0.6" y="4.9" width="9.6" height="5.6" rx="2.8"/><rect x="7.4" y="4.9" width="9.6" height="5.6" rx="2.8"/></g></svg>
<svg style="left:290.2px;top:46.0px" width="8.8" height="13.8" viewBox="0 0 8.8 13.8" fill="none" stroke="#444" stroke-width="0.80" ><path d="M0.5 0.5h7.8v12.6L4.4 9.6L0.5 13.1z"/></svg>
<svg style="left:335.0px;top:45.8px" width="11.8" height="14.4" viewBox="0 0 11.8 14.4" fill="none" stroke="#444" stroke-width="0.80" ><rect x="0.5" y="0.5" width="10.8" height="13.4"/><rect x="2.4" y="2.4" width="7" height="6.2"/><path d="M2.6 7.6L4.6 5.4L6 6.8L7.4 5.2L9.2 7.4" stroke-width="0.7"/><path d="M2.4 10.4h7M2.4 12h5" stroke-width="0.7"/></svg>
<svg style="left:382.6px;top:46.0px" width="13.6" height="13.6" viewBox="0 0 13.6 13.6" fill="none" stroke="#444" stroke-width="0.80" ><path d="M0.5 0.5h5.8l2 2v6.4h-7.8z" fill="#f1f1f1"/><path d="M5.2 4.6h5.6l2.2 2.2v6.2h-7.8z" fill="#f1f1f1"/><path d="M8.8 6.6h3v3.6l-1.5-1.2l-1.5 1.2z" fill="#222" stroke="none"/></svg>
<svg style="left:428.8px;top:47.2px" width="10.4" height="8.0" viewBox="0 0 10.4 8.0" fill="none" stroke="#444" stroke-width="0.80" ><path d="M0 0.5h6.6M0 2.8h5M0 5.1h6.6M0 7.4h6.6" stroke-width="0.8"/><path d="M9.6 0v8" stroke-width="0.7" stroke-dasharray="1 1"/></svg>
<svg style="left:429.0px;top:65.6px" width="9.8" height="9.8" viewBox="0 0 9.8 9.8" fill="none" stroke="#c3c3c3" stroke-width="0.80" ><path d="M8.6 3.2A4.2 4.2 0 1 0 9.1 6"/><path d="M6.6 0.6L8.9 3.2L6 3.6" fill="#c3c3c3" stroke="none"/></svg>
<svg style="left:8.6px;top:100.2px" width="10.0" height="10.4" viewBox="0 0 10.0 10.4" fill="none" stroke="#606060" stroke-width="0.85" ><circle cx="4" cy="4" r="3.4"/><path d="M6.5 6.5L9.6 9.8"/></svg>
<svg style="left:8.0px;top:126.4px" width="11.2" height="10.2" viewBox="0 0 11.2 10.2" fill="none" stroke="#606060" stroke-width="0.85" ><path d="M0.5 0.5h10.2v6.8H4.4L2.4 9.4V7.3H0.5z"/><path d="M2.2 2.8h6.8M2.2 4.8h5" stroke-width="0.7"/></svg>
<svg style="left:7.6px;top:153.0px" width="12.0" height="10.4" viewBox="0 0 12.0 10.4" fill="none" stroke="#606060" stroke-width="0.85" ><path d="M2.6 2V0.5h-2.1v6.2h1.4"/><path d="M0.5 0.5h8v1.6" /><path d="M2.6 2.6h9v5.6h-1.4v1.8l-2-1.8h-5.6z"/><path d="M5 5.4h0.8M6.8 5.4h0.8M8.6 5.4h0.8" stroke-width="0.9"/></svg>
<svg style="left:8.8px;top:179.2px" width="9.6" height="9.0" viewBox="0 0 9.6 9.0" fill="none" stroke="#606060" stroke-width="0.90" ><path d="M0 0.5h7.6M2 3.2h7.6M0 5.9h7.6M2 8.6h5.6"/></svg>
<svg style="left:7.8px;top:206.0px" width="11.6" height="9.4" viewBox="0 0 11.6 9.4" fill="none" stroke="#606060" stroke-width="0.85" ><path d="M0.5 3h2.4l4.4-2.4v7.8L2.9 6H0.5z"/><path d="M2.2 6.2l0.8 2.8h1.6l-0.6-2.4M8.6 2.4Q10.4 4.4 8.6 6.4"/></svg>
<svg style="left:8.2px;top:231.2px" width="10.8" height="10.8" viewBox="0 0 10.8 10.8" fill="none" stroke="#606060" stroke-width="0.85" ><circle cx="5.4" cy="5.4" r="4.8"/><path d="M5.4 4.6v3.4M5.4 2.8v0.9" stroke-width="0.9"/></svg>
<div class="abs" style="left:783.4px;top:98.4px;font-size:9.6px;line-height:12px;font-weight:bold;color:#333">¶</div>
<svg style="left:782.2px;top:127.0px" width="10.4" height="8.4" viewBox="0 0 10.4 8.4" fill="none" stroke="#bdbdbd" stroke-width="0.80" ><rect x="0.5" y="0.5" width="9.4" height="7.4"/><path d="M0.5 2.8h9.4M3.6 0.5v7.4M6.8 0.5v7.4M0.5 5.2h9.4"/></svg>
<svg style="left:782.4px;top:153.4px" width="10.0" height="9.0" viewBox="0 0 10.0 9.0" fill="none" stroke="#bdbdbd" stroke-width="0.80" ><rect x="0.5" y="0.5" width="9" height="8"/><path d="M0.8 7L3.4 4.2L5.2 6L6.8 4.6L9.2 7" stroke-width="0.7"/><circle cx="3" cy="2.6" r="0.7"/></svg>
<svg style="left:782.8px;top:178.6px" width="9.2" height="10.6" viewBox="0 0 9.2 10.6" fill="none" stroke="#bdbdbd" stroke-width="0.80" ><rect x="0.5" y="0.5" width="8.2" height="9.6"/><path d="M0.5 2.4h8.2M0.5 8.2h8.2" stroke-width="0.7"/><rect x="0.5" y="8.2" width="8.2" height="1.9" fill="#bdbdbd" stroke="none"/></svg>
<svg style="left:782.6px;top:205.0px" width="9.8" height="9.8" viewBox="0 0 9.8 9.8" fill="none" stroke="#bdbdbd" stroke-width="0.80" ><rect x="0.5" y="0.5" width="5.6" height="5"/><circle cx="6" cy="6" r="3.3" fill="#f1f1f1"/></svg>
<svg style="left:782.6px;top:231.4px" width="9.8" height="9.6" viewBox="0 0 9.8 9.6" fill="none" stroke="#bdbdbd" stroke-width="0.80" ><path d="M0.5 9.1V6h2.2v3.1M3.8 9.1V3.4h2.2v5.7M7.1 9.1V0.5h2.2v8.6M0 9.1h9.8"/></svg>
<div class="abs" style="left:782.6px;top:255.6px;font-size:8.4px;line-height:10px;color:#bdbdbd;letter-spacing:-0.4px">Ta</div>
<svg style="left:783.6px;top:265.4px" width="7.6" height="2.4" viewBox="0 0 7.6 2.4" fill="none" stroke="#bdbdbd" stroke-width="0.70" ><path d="M0.3 2Q3.8 -0.8 7.3 2"/></svg>
<svg style="left:765.8px;top:88.4px" width="4.2" height="3.0" viewBox="0 0 4.2 3.0" fill="none" stroke="none" stroke-width="0.80" ><path d="M0 3L2.1 0.4L4.2 3Z" fill="#777" stroke="none"/></svg>
<svg style="left:765.8px;top:452.8px" width="4.2" height="3.0" viewBox="0 0 4.2 3.0" fill="none" stroke="none" stroke-width="0.80" ><path d="M0 0L2.1 2.6L4.2 0Z" fill="#777" stroke="none"/></svg>
<svg style="left:764.8px;top:140.0px" width="6.0" height="6.0" viewBox="0 0 6.0 6.0" fill="none" stroke="#bbb" stroke-width="0.80" ><path d="M0.8 1.2h4.4M0.8 3h4.4M0.8 4.8h4.4" stroke-width="0.7"/></svg>
<svg style="left:80.2px;top:463.2px" width="8.4" height="9.0" viewBox="0 0 8.4 9.0" fill="none" stroke="#444" stroke-width="0.80" ><path d="M0 0.5h8.4M0 2.6h8.4" stroke-width="0.9"/></svg>
<div class="abs" style="left:79.6px;top:467.4px;font-size:4.8px;line-height:6px;color:#444;letter-spacing:-0.1px">123</div>
<svg style="left:553.0px;top:466.6px" width="4.4" height="2.8" viewBox="0 0 4.4 2.8" fill="none" stroke="#444" stroke-width="0.80" ><path d="M0.4 0.4L2.2 2.2L4 0.4"/></svg>
<svg style="left:562.4px;top:462.6px" width="10.2" height="10.2" viewBox="0 0 10.2 10.2" fill="none" stroke="#444" stroke-width="0.70" ><circle cx="5.1" cy="5.1" r="4.5"/><ellipse cx="5.1" cy="5.1" rx="2" ry="4.5"/><path d="M0.6 5.1h9M1.4 2.8h7.4M1.4 7.4h7.4" stroke-width="0.6"/></svg>
<div class="abs" style="left:582.4px;top:461.4px;font-size:4.8px;line-height:6px;color:#444;font-weight:bold;letter-spacing:-0.2px">ABC</div>
<svg style="left:584.6px;top:466.6px" width="8.0" height="4.6" viewBox="0 0 8.0 4.6" fill="none" stroke="#444" stroke-width="0.90" ><path d="M0.4 2.2L2.6 4L7.6 0.4" /></svg>
<svg style="left:610.0px;top:462.4px" width="10.4" height="10.4" viewBox="0 0 10.4 10.4" fill="none" stroke="#444" stroke-width="0.80" ><path d="M7.6 0.5H0.5v9.4h7.1V6"/><path d="M2 3h3.6M2 5h2.6M2 7h2" stroke-width="0.7"/><path d="M5 7.6L5.4 6L9 2.2L10 3.2L6.4 7Z" stroke-width="0.7"/></svg>
<svg style="left:624.0px;top:466.6px" width="4.4" height="2.8" viewBox="0 0 4.4 2.8" fill="none" stroke="#444" stroke-width="0.80" ><path d="M0.4 0.4L2.2 2.2L4 0.4"/></svg>
<div class="abs" style="left:636.6px;top:460.5px;width:1px;height:14.5px;background:#dcdcdc"></div>
<svg style="left:647.4px;top:462.6px" width="9.0" height="10.0" viewBox="0 0 9.0 10.0" fill="none" stroke="#444" stroke-width="0.80" ><rect x="0.5" y="0.5" width="8" height="9"/><path d="M2.2 3.4V2.2h1.2M5.6 2.2h1.2v1.2M6.8 6.6v1.2H5.6M3.4 7.8H2.2V6.6" stroke-width="0.8"/><path d="M2.2 2.2L3.6 3.6M6.8 2.2L5.4 3.6M6.8 7.8L5.4 6.4M2.2 7.8L3.6 6.4" stroke-width="0.6"/></svg>
<svg style="left:665.0px;top:463.2px" width="12.6" height="8.6" viewBox="0 0 12.6 8.6" fill="none" stroke="#444" stroke-width="0.80" ><path d="M0.5 0v8.6M12.1 0v8.6M2 4.3h8.6M3.6 2.6L2 4.3L3.6 6M9 2.6L10.6 4.3L9 6"/></svg>
<svg style="left:689.0px;top:467.0px" width="8.6" height="1.0" viewBox="0 0 8.6 1.0" fill="none" stroke="#444" stroke-width="0.90" ><path d="M0 0.5h8.6"/></svg>
<svg style="left:762.6px;top:463.2px" width="8.6" height="8.6" viewBox="0 0 8.6 8.6" fill="none" stroke="#444" stroke-width="0.90" ><path d="M0 4.3h8.6M4.3 0v8.6"/></svg>
<div class="abs" style="left:-5px;top:470.5px;width:7px;height:10px;border-radius:50%;background:#5b5a78"></div>

<div class="menu" style="left:293.7px;top:250.2px;width:132.0px;height:204.90px">
<div class="mi" style="top:3.20px"><svg style="left:4.6px;top:3.6px" width="11" height="11" viewBox="0 0 11 11" fill="none" stroke="#555" stroke-width="0.75"><circle cx="2" cy="3.2" r="1.3"/><circle cx="2" cy="7.8" r="1.3"/><path d="M3 4L10 8.6M3 7L10 2.4"/></svg><span style="position:absolute;left:19.6px;top:0.3px">Cut</span></div>
<div class="mi" style="top:21.10px"><svg style="left:4.6px;top:3.6px" width="11" height="11" viewBox="0 0 11 11" fill="none" stroke="#555" stroke-width="0.75"><path d="M1 1.5h5.5v2M1 1.5v6h2.2"/><rect x="3.4" y="3.6" width="6" height="6.4"/><path d="M5 6h2.8M5 7.8h2.8" stroke-width="0.9"/></svg><span style="position:absolute;left:19.6px;top:0.3px">Copy</span></div>
<div class="mi" style="top:39.00px"><svg style="left:4.6px;top:3.6px" width="11" height="11" viewBox="0 0 11 11" fill="none" stroke="#555" stroke-width="0.75"><path d="M1 2h5.5v1.6M1 2v6.4h2.2M2.8 1.2h2.2" /><rect x="3.4" y="3.6" width="6" height="6.4"/><path d="M5 6h2.8M5 7.8h2.8" stroke-width="0.9"/></svg><span style="position:absolute;left:19.6px;top:0.3px">Paste</span></div>
<div class="mi" style="top:56.90px"><svg style="left:4.6px;top:3.6px" width="11" height="11" viewBox="0 0 11 11" fill="none" stroke="#555" stroke-width="0.75"><path d="M2.6 3.6V1.4h5.8v2.2"/><rect x="0.8" y="3.6" width="9.4" height="4.6" rx="0.8"/><rect x="2.6" y="6.2" width="5.8" height="3.6" fill="#fff"/></svg><span style="position:absolute;left:19.6px;top:0.3px">Print selection</span></div>
<div class="ms" style="top:77.70px"></div>
<div class="mi" style="top:81.30px"><span style="position:absolute;left:19.6px;top:0.3px">Page break before</span></div>
<div class="mi" style="top:99.20px"><span style="position:absolute;left:19.6px;top:0.3px">Keep lines together</span></div>
<div class="mi" style="top:117.10px"><span style="position:absolute;left:5.6px;top:-0.4px;font-size:10.5px;font-weight:bold;color:#333">¶</span><span style="position:absolute;left:19.6px;top:0.3px">Paragraph advanced settings</span></div>
<div class="ms" style="top:137.90px"></div>
<div class="mi" style="top:141.50px"><svg style="left:4.6px;top:3.6px" width="11" height="11" viewBox="0 0 11 11" fill="none" stroke="#555" stroke-width="0.75"><path d="M0.8 1.6h9.4v6.2H4.2L2.2 9.6V7.8H0.8z"/><path d="M2.6 3.8h5.8M2.6 5.6h4.4" stroke-width="0.7"/></svg><span style="position:absolute;left:19.6px;top:0.3px">Add comment</span></div>
<div class="ms" style="top:162.30px"></div>
<div class="mi" style="top:165.90px"><span style="position:absolute;left:19.6px;top:0.3px">Formatting as Style</span><svg style="left:121.8px;top:7.2px" width="3" height="4" viewBox="0 0 3 4"><path d="M0 0.3L2.2 2L0 3.7Z" fill="#444"/></svg></div>
<div class="mi hl" style="top:183.80px"><span style="position:absolute;left:19.6px;top:0.3px">ChatGPT</span><svg style="left:121.8px;top:7.2px" width="3" height="4" viewBox="0 0 3 4"><path d="M0 0.3L2.2 2L0 3.7Z" fill="#444"/></svg></div>
</div>
<div class="menu" style="left:426.2px;top:320.1px;width:119.2px;height:144.70px">
<div class="mi hl" style="top:3.20px"><span style="position:absolute;left:19.3px;top:0.3px">Text analysis</span><svg style="left:108.3px;top:7.2px" width="3" height="4" viewBox="0 0 3 4"><path d="M0 0.3L2.2 2L0 3.7Z" fill="#444"/></svg></div>
<div class="mi" style="top:21.10px"><span style="position:absolute;left:19.3px;top:0.3px">Word analysis</span><svg style="left:108.3px;top:7.2px" width="3" height="4" viewBox="0 0 3 4"><path d="M0 0.3L2.2 2L0 3.7Z" fill="#444"/></svg></div>
<div class="mi" style="top:39.00px"><span style="position:absolute;left:19.3px;top:0.3px">Translate</span><svg style="left:108.3px;top:7.2px" width="3" height="4" viewBox="0 0 3 4"><path d="M0 0.3L2.2 2L0 3.7Z" fill="#444"/></svg></div>
<div class="mi" style="top:56.90px"><span style="position:absolute;left:19.3px;top:0.3px">Generate image from text</span><svg style="left:108.3px;top:7.2px" width="3" height="4" viewBox="0 0 3 4"><path d="M0 0.3L2.2 2L0 3.7Z" fill="#444"/></svg></div>
<div class="ms" style="top:77.70px"></div>
<div class="mi" style="top:81.30px"><span style="position:absolute;left:19.3px;top:0.3px">Chat</span></div>
<div class="mi" style="top:99.20px"><span style="position:absolute;left:19.3px;top:0.3px">Custom request</span></div>
<div class="ms" style="top:120.00px"></div>
<div class="mi" style="top:123.60px"><span style="position:absolute;left:19.3px;top:0.3px">Settings</span></div>
</div>
<div class="menu" style="left:545.8px;top:320.1px;width:109.0px;height:42.20px">
<div class="mi hl" style="top:3.20px"><span style="position:absolute;left:19.0px;top:0.3px">Summarize</span></div>
<div class="mi" style="top:21.10px"><span style="position:absolute;left:19.0px;top:0.3px">Keywords</span></div>
</div>

</div>
</body>
</html>
